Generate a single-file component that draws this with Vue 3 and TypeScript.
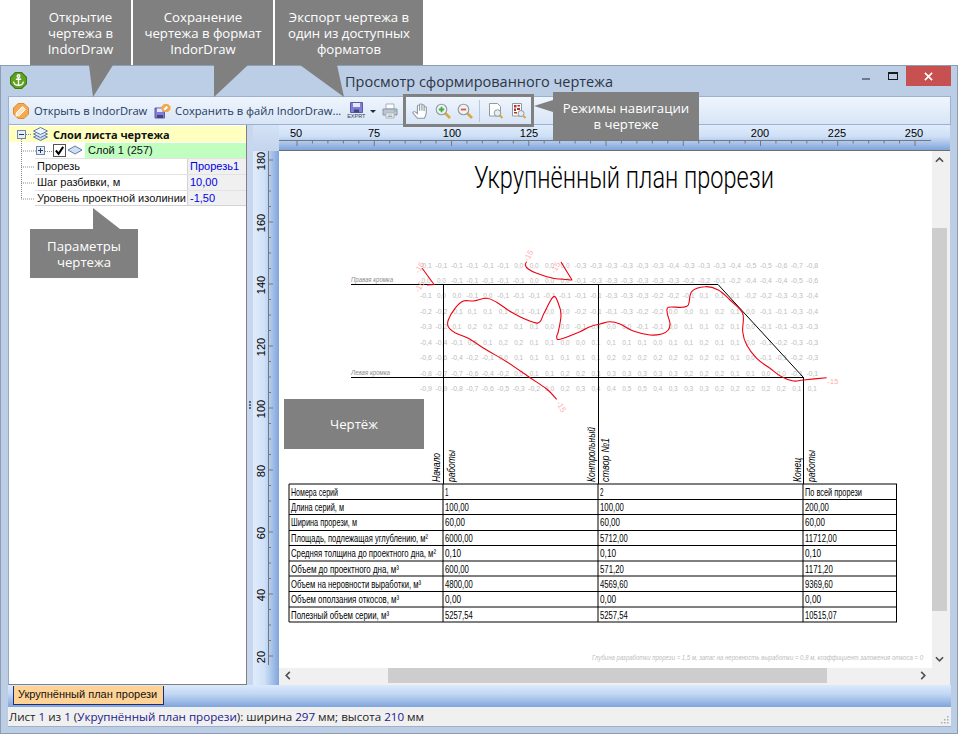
<script setup lang="ts">
type Pt = [number, number];
const zoomA = (a: number[]): Pt[] => {
  const r: Pt[] = [];
  for (let i = 0; i < a.length; i += 2) r.push([340 + a[i] / 3, 245 + a[i + 1] / 3]);
  return r;
};
const zoomB = (a: number[]): Pt[] => {
  const r: Pt[] = [];
  for (let i = 0; i < a.length; i += 2) r.push([590 + a[i] / 3, 245 + a[i + 1] / 3]);
  return r;
};
const smooth = (p: Pt[]): string => {
  let d = `M${p[0][0].toFixed(1)} ${p[0][1].toFixed(1)}`;
  for (let i = 0; i < p.length - 1; i++) {
    const a = p[Math.max(0, i - 1)];
    const b = p[i];
    const c = p[i + 1];
    const e = p[Math.min(p.length - 1, i + 2)];
    const c1x = b[0] + (c[0] - a[0]) / 6;
    const c1y = b[1] + (c[1] - a[1]) / 6;
    const c2x = c[0] - (e[0] - b[0]) / 6;
    const c2y = c[1] - (e[1] - b[1]) / 6;
    d += `C${c1x.toFixed(1)} ${c1y.toFixed(1)} ${c2x.toFixed(1)} ${c2y.toFixed(1)} ${c[0].toFixed(1)} ${c[1].toFixed(1)}`;
  }
  return d;
};
const mainCurve = smooth([
  ...zoomA([650,463,620,432,570,398,500,350,440,315,385,280,345,263,325,245,325,225,345,190,370,168,400,168,440,160,470,172,520,205,580,232,600,230,612,205,640,155,655,175,663,210,655,260,650,275,660,283,720,260]),
  ...zoomB([0,245,30,237,60,230,90,237,130,258,180,270,215,267,235,255,240,235,232,205,235,187,275,187,295,180,305,140,345,125,385,135,420,165,458,205,458,260,470,300,500,340,540,370,575,395,610,408,640,405,710,398]),
]);
const curveB = 'M561 262L572 280' + smooth(zoomA([697,105,640,100,590,85,565,72,556,60,560,50])).replace('M', 'L');

const grid: string[] = [
  '-0,1 -0,1 -0,1 -0,1 -0,1 -0,1 0,0 0,0 0,0 0,0 -0,3 -0,3 -0,3 -0,3 -0,3 -0,3 -0,4 -0,3 -0,3 -0,3 -0,4 -0,5 -0,5 -0,6 -0,7 -0,8',
  '0,0 0,0 -0,1 -0,1 -0,1 -0,1 -0,1 0,0 0,0 0,0 -0,1 -0,3 -0,3 -0,3 -0,3 -0,3 -0,3 -0,2 -0,2 -0,1 -0,2 -0,4 -0,4 -0,4 -0,5 -0,6',
  '-0,1 0,0 0,0 -0,1 0,0 -0,1 -0,1 -0,1 -0,1 -0,1 -0,1 -0,1 -0,3 -0,3 -0,3 -0,2 -0,2 -0,1 0,1 0,1 0,1 -0,2 -0,2 -0,3 -0,3 -0,4',
  '-0,2 -0,2 -0,1 0,1 0,1 0,1 -0,1 -0,1 0,0 0,0 -0,2 -0,1 -0,1 -0,3 -0,2 -0,2 0,0 0,0 0,1 0,2 0,1 0,0 -0,1 -0,1 -0,3 -0,4',
  '-0,3 -0,2 0,1 0,2 0,2 0,2 0,1 0,1 0,0 0,0 -0,1 0,0 0,0 0,0 -0,1 -0,1 0,0 0,1 0,1 0,2 0,1 0,0 -0,1 -0,1 -0,3 -0,3',
  '-0,4 -0,4 -0,1 0,0 0,1 0,2 0,2 0,1 0,1 0,0 0,0 0,1 0,1 0,1 0,1 0,0 0,1 0,1 0,2 0,1 0,1 0,0 -0,1 -0,2 -0,3 -0,3',
  '-0,6 -0,6 -0,4 -0,2 -0,1 0,0 0,1 0,1 0,1 0,1 0,1 0,1 0,2 0,2 0,2 0,2 0,2 0,2 0,2 0,2 0,1 0,0 -0,1 -0,1 -0,2 -0,3',
  '-0,8 -0,7 -0,7 -0,6 -0,4 -0,2 0,0 0,1 0,1 0,2 0,2 0,3 0,3 0,3 0,3 0,3 0,3 0,2 0,2 0,2 0,1 0,1 0,0 0,0 -0,1 -0,1',
  '-0,9 -0,9 -0,8 -0,7 -0,6 -0,5 -0,3 -0,2 0,0 0,2 0,3 0,4 0,4 0,5 0,5 0,4 0,3 0,3 0,3 0,2 0,2 0,2 0,2 0,2 0,1 0,1',
];
const rowY = [268, 282.5, 298, 314, 329, 345, 360, 376, 391];
const gridCells = grid.flatMap((line, r) =>
  line.split(' ').slice(0, 26).map((v, c) => ({
    k: `${r}-${c}`,
    v,
    x: 426 + c * 15.45,
    y: rowY[r],
    w: v.startsWith('-') ? 12 : 9,
  })),
);

const rowLines = [484, 499.5, 514.5, 530.5, 545.5, 561, 576, 591.5, 607, 622];
const colLines = [289, 443, 598, 803, 896.5];
const tableRows: { name: string; nw: number; vals: string[] }[] = [
  { name: 'Номера серий', nw: 47, vals: ['1', '2', 'По всей прорези'] },
  { name: 'Длина серий, м', nw: 53, vals: ['100,00', '100,00', '200,00'] },
  { name: 'Ширина прорези, м', nw: 66, vals: ['60,00', '60,00', '60,00'] },
  { name: 'Площадь, подлежащая углублению, м²', nw: 137, vals: ['6000,00', '5712,00', '11712,00'] },
  { name: 'Средняя толщина до проектного дна, м²', nw: 145, vals: ['0,10', '0,10', '0,10'] },
  { name: 'Объем до проектного дна, м³', nw: 108, vals: ['600,00', '571,20', '1171,20'] },
  { name: 'Объем на неровности выработки, м³', nw: 130, vals: ['4800,00', '4569,60', '9369,60'] },
  { name: 'Объем оползания откосов, м³', nw: 108, vals: ['0,00', '0,00', '0,00'] },
  { name: 'Полезный объем серии, м³', nw: 98, vals: ['5257,54', '5257,54', '10515,07'] },
];
const valX = [445, 600, 805];
const valW = (v: string): number => (v.length > 8 ? 57 : v.length === 1 ? 3.5 : v.length * 3.9 + 0.5);

const vertLabels = [
  { t: 'Начало', x: 440, w: 29 },
  { t: 'работы', x: 455, w: 32 },
  { t: 'Контрольный', x: 595, w: 55 },
  { t: 'створ №1', x: 609, w: 44 },
  { t: 'Конец', x: 801, w: 24 },
  { t: 'работы', x: 815, w: 32 },
];

const topLabels = [
  { v: 50, x: 296 }, { v: 75, x: 374 }, { v: 100, x: 452 }, { v: 125, x: 529 },
  { v: 150, x: 606 }, { v: 175, x: 683 }, { v: 200, x: 760 }, { v: 225, x: 837 }, { v: 250, x: 914 },
];
const topTicks = Array.from({ length: 41 }, (_, i) => ({ x: 297 + i * 15.45, major: i % 5 === 0 })).filter((t) => t.x < 931);
const leftLabels = [180, 160, 140, 120, 100, 80, 60, 40, 20].map((v, i) => ({ v, y: 160 + i * 62 }));
const leftTicks = Array.from({ length: 36 }, (_, i) => ({ y: 160 + i * 15.5, major: i % 4 === 0 })).filter((t) => t.y < 665);

const props = [
  { n: 'Прорезь', v: 'Прорезь1' },
  { n: 'Шаг разбивки, м', v: '10,00' },
  { n: 'Уровень проектной изолинии', v: '-1,50' },
];
</script>

<template>
  <div class="root">
    <div class="window">
      <div class="titlebar">
        <svg class="appicon" viewBox="0 0 16 16" width="17" height="17">
          <path d="M5 .5h6L15.5 5v6L11 15.500H5L.5 11V5z" fill="#5fa321" stroke="#3f7a12" />
          <g fill="none" stroke="#fff" stroke-width="1.300">
            <circle cx="8" cy="3.800" r="1.200" />
            <path d="M8 5v7.500M5.500 6.800h5M3.300 9c.5 2.300 2.500 3.500 4.700 3.500s4.200-1.200 4.700-3.500" />
          </g>
        </svg>
        <span class="title">Просмотр сформированного чертежа</span>
        <div class="winbtns">
          <span class="wmin"></span>
          <span class="wmax"></span>
          <span class="wclose">
            <svg viewBox="0 0 10 10" width="9" height="9"><path d="M1 1l8 8M9 1l-8 8" stroke="#fff" stroke-width="1.800" /></svg>
          </span>
        </div>
      </div>

      <div class="toolbar">
        <svg class="ic" viewBox="0 0 16 16" width="16" height="16">
          <path d="M5 .5h6L15.500 5v6L11 15.500H5L.5 11V5z" fill="#f5a84e" stroke="#e08a2a" />
          <path d="M3.500 9.500l6-6 3 3-6 6-3.500.5z" fill="#fde3c4" stroke="#fff" />
        </svg>
        <span class="tbtext open">Открыть в IndorDraw</span>
        <svg class="ic" viewBox="0 0 17 16" width="17" height="16">
          <path d="M1 5h9.500v10H1z" fill="#7f7fd8" stroke="#5a5aa8" />
          <path d="M3 5.500h5.500V9H3z" fill="#e8e8f8" />
          <path d="M3 12h6v3H3z" fill="#44447c" />
          <path d="M10 1h4l2.500 2.500v3L14 9h-4L7.500 6.500v-3z" fill="#f5a84e" />
          <path d="M9.500 6l3-3 1.500 1.500-3 3z" fill="#fff" />
        </svg>
        <span class="tbtext save">Сохранить в файл IndorDraw...</span>
        <div class="exprt">
          <svg viewBox="0 0 13 11" width="15" height="11">
            <path d="M.5.500h12v10H.5z" fill="#7f7fd8" stroke="#5a5aa8" />
            <path d="M3 1h7v4H3z" fill="#e8e8f8" />
            <path d="M4 7.500h5v3H4z" fill="#44447c" />
          </svg>
          <span>EXPRT</span>
        </div>
        <span class="caret"></span>
        <svg class="ic printer" viewBox="0 0 16 16" width="16" height="16">
          <path d="M4 1h8v5H4z" fill="#fff" stroke="#a6afbb" />
          <path d="M1 6h14v6H1z" fill="#bcc5d1" stroke="#8b95a3" />
          <path d="M4 10h8v5H4z" fill="#fff" stroke="#a6afbb" />
          <path d="M5.500 12h5M5.500 13.500h5" stroke="#9aa" />
          <circle cx="13" cy="8" r=".8" fill="#4c8" />
        </svg>
        <svg class="ic hand" viewBox="1 .5 12.500 15.500" width="17" height="16" preserveAspectRatio="none">
          <path d="M5 15.300L1.800 10.500c-.7-1.200.8-2.200 1.800-1.200L5 10.800V3.500c0-1.200 1.600-1.200 1.600 0V8 2.300c0-1.200 1.700-1.200 1.700 0V8 3c0-1.200 1.600-1.200 1.600 0v5.300-3.500c0-1.100 1.600-1.100 1.600 0V10c0 2-1 3.500-1.300 5.300z" fill="#fff" stroke="#8d96a1" stroke-width=".8" />
        </svg>
        <svg class="ic zoomi" viewBox="0 0 16 16" width="16" height="16">
          <path d="M10 10l5 5" stroke="#d9a93a" stroke-width="2.600" />
          <circle cx="6.500" cy="6.500" r="5.300" fill="#eef3f4" stroke="#8f9ba3" stroke-width="1.100" />
          <path d="M3.800 6.500h5.400M6.500 3.800v5.400" stroke="#3fae3f" stroke-width="1.800" />
        </svg>
        <svg class="ic zoomo" viewBox="0 0 16 16" width="16" height="16">
          <path d="M10 10l5 5" stroke="#d9a93a" stroke-width="2.600" />
          <circle cx="6.500" cy="6.500" r="5.300" fill="#eef3f4" stroke="#8f9ba3" stroke-width="1.100" />
          <path d="M3.800 6.500h5.400" stroke="#e05a4a" stroke-width="1.800" />
        </svg>
        <span class="tbsep"></span>
        <svg class="ic page1" viewBox="0 0 16 16" width="16" height="16">
          <path d="M1.500.5h8l3 3V13h-11z" fill="#fff" stroke="#8f9ba3" />
          <circle cx="9.500" cy="10" r="3.300" fill="#e4eef0" stroke="#8f9ba3" />
          <path d="M12 12.500l2.500 2.500" stroke="#d9a93a" stroke-width="2" />
        </svg>
        <svg class="ic page2" viewBox="0 0 16 16" width="16" height="16">
          <path d="M1.500.5h9V13h-9z" fill="#fff" stroke="#8f9ba3" />
          <path d="M3 2h2.500v2.500H3zM6.500 2H9v1.500H6.500zM3 5.500h2V8H3zM6 5h3v2H6zM3 9h3v1.500H3z" fill="#b8322a" />
          <circle cx="10" cy="10.500" r="3" fill="#e4eef0" stroke="#8f9ba3" />
          <path d="M12.300 12.800l2.200 2.200" stroke="#d9a93a" stroke-width="2" />
        </svg>
      </div>

      <div class="main">
        <div class="leftpane">
          <svg class="treelines" width="60" height="85">
            <path d="M4.500 14V74M4 42h14M4 58h14M4 74h14M4 26h15M9 9.500h6M28 26.500h8" fill="none" stroke="#8a8a8a" stroke-dasharray="1 1" />
          </svg>
          <div class="rootrow">
            <svg class="expander" viewBox="0 0 9 9" width="9" height="9">
              <rect x=".5" y=".5" width="8" height="8" fill="#e8eef8" stroke="#6f87ab" />
              <path d="M2 4.500h5" stroke="#223a66" />
            </svg>
            <svg class="layers" viewBox="0 0 16 16" width="17" height="16">
              <path d="M1 11l7-3.500 7 3.500-7 3.500z" fill="#c5d6ee" stroke="#5f7ea6" />
              <path d="M1 8l7-3.500L15 8l-7 3.500z" fill="#dce7f6" stroke="#5f7ea6" />
              <path d="M1 5l7-3.500L15 5l-7 3.500z" fill="#eef4fb" stroke="#5f7ea6" />
            </svg>
            <b class="roottext">Слои листа чертежа</b>
          </div>
          <div class="layerrow">
            <svg class="expander" viewBox="0 0 9 9" width="9" height="9">
              <rect x=".5" y=".5" width="8" height="8" fill="#e8eef8" stroke="#6f87ab" />
              <path d="M2 4.500h5M4.500 2v5" stroke="#223a66" />
            </svg>
            <span class="check">
              <svg viewBox="0 0 12 12" width="11" height="11"><path d="M2 6l3 3.500L10 2" fill="none" stroke="#000" stroke-width="2.200" /></svg>
            </span>
            <svg class="layer1" viewBox="0 0 16 10" width="16" height="10">
              <path d="M1 5l7-4 7 4-7 4z" fill="#cfe0f4" stroke="#5f7ea6" />
            </svg>
            <span class="layertext">Слой 1 (257)</span>
          </div>
          <div v-for="p in props" :key="p.n" class="proprow">
            <span class="pname">{{ p.n }}</span>
            <span class="pval">{{ p.v }}</span>
          </div>
        </div>
        <div class="splitter"><i></i><i></i><i></i></div>
        <div class="viewer">
          <div class="toprow">
            <div class="corner"></div>
            <svg class="topruler" width="671" height="25" viewBox="279 125 671 25">
              <path d="M279 140.500H931" stroke="#777" fill="none" />
              <path v-for="t in topTicks" :key="t.x" :d="`M${t.x} 140V${t.major ? 146 : 143.500}`" stroke="#777" />
              <text v-for="l in topLabels" :key="l.v" class="rtext" :x="l.x" y="137" text-anchor="middle">{{ l.v }}</text>
            </svg>
          </div>
          <div class="midrow">
            <svg class="leftruler" width="26" height="534" viewBox="253 151 26 534">
              <path d="M268.500 151V665" stroke="#777" fill="none" />
              <path v-for="t in leftTicks" :key="t.y" :d="`M268 ${t.y}H${t.major ? 273 : 271}`" stroke="#777" />
              <text v-for="l in leftLabels" :key="l.v" class="rtext" :transform="`translate(265 ${l.y + 1}) rotate(-90)`" text-anchor="middle">{{ l.v }}</text>
            </svg>
            <div class="canvaswrap">
              <div class="canvasrow">
                <svg class="sheet" width="653" height="517" viewBox="279 151 653 517">
                  <text class="heading" x="474" y="188" textLength="300" lengthAdjust="spacingAndGlyphs">Укрупнённый план прорези</text>
                  <text v-for="c in gridCells" :key="c.k" class="gridtext" :x="c.x" :y="c.y" text-anchor="middle" :textLength="c.w" lengthAdjust="spacingAndGlyphs">{{ c.v }}</text>
                  <text class="edge" x="351" y="282" textLength="42" lengthAdjust="spacingAndGlyphs">Правая кромка</text>
                  <text class="edge" x="351" y="375" textLength="39" lengthAdjust="spacingAndGlyphs">Левая кромка</text>
                  <path d="M351 284.500H718L803 377M351 377.500H803M443.500 284V484M598.500 284V484M803.500 377V484" fill="none" stroke="#000" />
                  <path :d="mainCurve" fill="none" stroke="#ee0010" stroke-width="1.100" />
                  <path :d="curveB" fill="none" stroke="#ee0010" stroke-width="1.100" />
                  <path d="M422 268L434 284.500L427 285" fill="none" stroke="#ee0010" stroke-width="1.100" />
                  <text class="redtext" transform="translate(528 262) rotate(-60)">-15</text>
                  <text class="redtext" transform="translate(556 403) rotate(60)">-15</text>
                  <text class="redtext" x="827" y="384">-15</text>
                  <text class="redtext" transform="translate(419 274) rotate(-60)">-15</text>
                  <text class="redtext" transform="translate(419 293) rotate(-60)">-15</text>
                  <text class="redtext" transform="translate(555 274) rotate(-60)">-15</text>

                  <text v-for="v in vertLabels" :key="v.x" class="vert" :transform="`translate(${v.x} 482) rotate(-90)`" :textLength="v.w" lengthAdjust="spacingAndGlyphs">{{ v.t }}</text>

                  <path v-for="y in rowLines" :key="y" :d="`M289 ${y}H897`" stroke="#000" />
                  <path v-for="x in colLines" :key="x" :d="`M${x} 484V622`" stroke="#000" />
                  <g v-for="(r, i) in tableRows" :key="r.name">
                    <text class="cell" x="291" :y="rowLines[i] + 11.5" :textLength="r.nw" lengthAdjust="spacingAndGlyphs">{{ r.name }}</text>
                    <text v-for="(v, j) in r.vals" :key="j" class="cell" :x="valX[j]" :y="rowLines[i] + 11.5" :textLength="valW(v)" lengthAdjust="spacingAndGlyphs">{{ v }}</text>
                  </g>
                  <text class="note" x="592" y="660" textLength="331" lengthAdjust="spacingAndGlyphs">Глубина разработки прорези = 1,5 м, запас на неровность выработки = 0,8 м, коэффициент заложения откоса = 0</text>
                </svg>
                <div class="vscroll">
                  <svg class="arrow" viewBox="0 0 10 6" width="9" height="6"><path d="M1 5l4-4 4 4" fill="none" stroke="#505050" stroke-width="1.800" /></svg>
                  <div class="vthumb"></div>
                  <svg class="arrow" viewBox="0 0 10 6" width="9" height="6"><path d="M1 1l4 4 4-4" fill="none" stroke="#505050" stroke-width="1.800" /></svg>
                </div>
              </div>
              <div class="hscroll">
                <svg class="arrowh" viewBox="0 0 6 10" width="6" height="9"><path d="M5 1L1 5l4 4" fill="none" stroke="#505050" stroke-width="1.800" /></svg>
                <div class="hthumb"></div>
                <svg class="arrowh" viewBox="0 0 6 10" width="6" height="9"><path d="M1 1l4 4-4 4" fill="none" stroke="#505050" stroke-width="1.800" /></svg>
              </div>
            </div>
          </div>
        </div>
      </div>

      <div class="tabs"><span class="tab">Укрупнённый план прорези</span></div>
      <div class="status">
        <span>Лист <em>1</em> из <em>1</em> (<em>Укрупнённый план прорези</em>): ширина <em>297</em> мм; высота <em>210</em> мм</span>
        <svg class="grip" width="10" height="10" viewBox="0 0 10 10">
          <path d="M8 1h1.500v1.500H8zM5 4h1.500v1.500H5zM8 4h1.500v1.500H8zM2 7h1.500v1.500H2zM5 7h1.500v1.500H5zM8 7h1.500v1.500H8z" fill="#a9adb3" />
        </svg>
      </div>
    </div>

    <svg class="arrows" width="958" height="734">
      <g fill="#808080">
        <path d="M89 65H113L93 97Z" />
        <path d="M214 65H248L214 97Z" />
        <path d="M300 65H337L344 97Z" />
        <path d="M553 100V112L534 106Z" />
        <path d="M93 229V208L120 229Z" />
      </g>
    </svg>
    <div class="hl"></div>
    <div class="note-box n1">Открытие<br />чертежа в<br />IndorDraw</div>
    <div class="note-box n2">Сохранение<br />чертежа в формат<br />IndorDraw</div>
    <div class="note-box n3">Экспорт чертежа в<br />один из доступных<br />форматов</div>
    <div class="note-box n4">Режимы навигации<br />в чертеже</div>
    <div class="note-box n5">Параметры<br />чертежа</div>
    <div class="note-box n6">Чертёж</div>
  </div>
</template>

<style>
html, body { margin: 0; background: #fff; overflow: hidden; }
</style>

<style scoped>
.root { position: relative; width: 958px; height: 734px; overflow: hidden; background: #fff; font-family: "Open Sans", sans-serif; }
.window { position: absolute; left: 0; top: 65px; width: 958px; height: 669px; box-sizing: border-box; background: #bccde6; border: 1px solid #8f9db3; display: flex; flex-direction: column; padding: 0 6px 6px 7px; }
.titlebar { height: 30px; flex: none; display: flex; align-items: flex-start; position: relative; }
.appicon { margin: 6px 0 0 2px; }
.title { position: absolute; left: 337px; top: 6px; font-size: 14.500px; color: #2b3644; white-space: nowrap; }
.winbtns { margin-left: auto; display: flex; align-items: flex-start; }
.wmin { width: 8px; height: 2px; margin: 12px 18px 0 0; background: #6d7a8c; }
.wmax { width: 8px; height: 5px; border: 1px solid #1a1a1a; border-top-width: 2px; margin: 6px 8px 0 0; }
.wclose { width: 45px; height: 20px; background: #c75050; display: flex; align-items: center; justify-content: center; }

.toolbar { height: 27px; flex: none; display: flex; align-items: center; background: linear-gradient(#eff5fd, #d8e5f6); border: 1px solid #9db1cf; box-sizing: content-box; padding-left: 4px; }
.tbtext { font-size: 11.200px; color: #243a5e; white-space: nowrap; }
.open { margin: 0 7px 0 5px; letter-spacing: -0.100px; }
.save { margin: 0 6px 0 4px; }
.exprt { width: 18px; display: flex; flex-direction: column; align-items: center; }
.exprt span { font-size: 5.500px; line-height: 6px; color: #2d3d56; font-family: "Liberation Sans", sans-serif; }
.caret { width: 0; height: 0; border: 3px solid transparent; border-top: 3px solid #1e2d44; border-bottom: 0; margin-left: 5px; margin-top: 1px; }
.printer { margin-left: 6px; }
.hand { margin-left: 14px; }
.zoomi { margin-left: 6px; }
.zoomo { margin-left: 6px; }
.tbsep { width: 1px; height: 22px; background: #b6c6dd; margin-left: 6px; }
.page1 { margin-left: 8px; }
.page2 { margin-left: 7px; }

.main { flex: 1; min-height: 0; display: flex; }
.leftpane { width: 237px; flex: none; position: relative; background: #fff; border: 1px solid #808080; border-top: 0; border-left-color: #9ba9bd; font-family: "Liberation Sans", sans-serif; font-size: 11px; color: #111; box-sizing: content-box; }
.treelines { position: absolute; left: 8px; top: 0; z-index: 1; }
.rootrow { height: 16px; margin-top: 1px; display: flex; align-items: center; background: #ffffc0; position: relative; padding-left: 8px; }
.expander { flex: none; display: block; }
.layers { margin-left: 6px; }
.roottext { margin-left: 4px; font-size: 11px; letter-spacing: -0.050px; font-family: "Open Sans", sans-serif; }
.layerrow { height: 16px; display: flex; align-items: center; position: relative; padding-left: 27px; }
.check { width: 11px; height: 11px; border: 1px solid #555; background: #fff; margin-left: 8px; flex: none; display: block; }
.check svg { display: block; }
.layer1 { margin-left: 1px; flex: none; }
.layertext { flex: 1; background: #c0ffc0; height: 15px; line-height: 15px; padding-left: 3px; margin-left: 2px; }
.proprow { height: 16px; margin-left: 26px; box-sizing: border-box; border-top: 1px solid #e2e2e2; display: flex; position: relative; line-height: 15px; background: #fff; }
.proprow:last-of-type { border-bottom: 1px solid #d4d4d4; }
.pname { width: 152px; flex: none; padding-left: 2px; box-sizing: border-box; white-space: nowrap; }
.pval { flex: 1; background: #f0f0f0; color: #0000e0; padding-left: 2px; border-left: 1px solid #d4d4d4; }
.splitter { width: 6px; flex: none; background: #c8d7ee; display: flex; flex-direction: column; align-items: center; justify-content: center; gap: 1px; }
.splitter i { width: 2px; height: 2px; background: #56698a; }

.viewer { flex: 1; min-width: 0; display: flex; flex-direction: column; }
.toprow { height: 26px; flex: none; display: flex; }
.corner { width: 26px; flex: none; background: linear-gradient(#d4e2f5, #c3d4ec); }
.topruler { display: block; background: linear-gradient(#e0ecfc 0%, #cfe0f7 45%, #7fa5dc 100%); border-bottom: 1px solid #6e6e6e; }
.midrow { flex: 1; min-height: 0; display: flex; }
.leftruler { display: block; flex: none; background: linear-gradient(90deg, #e0ecfc 0%, #cfe0f7 45%, #7fa5dc 100%); }
.rtext { font-family: "Liberation Sans", sans-serif; font-size: 11px; fill: #000; }
.canvaswrap { width: 671px; flex: none; display: flex; flex-direction: column; background: #f0f0f0; }
.canvasrow { display: flex; height: 517px; flex: none; }
.sheet { display: block; background: #fff; flex: none; }
.vscroll { width: 15px; flex: none; display: flex; flex-direction: column; align-items: center; justify-content: space-between; position: relative; padding: 6px 0; box-sizing: border-box; background: #f0f0f0; }
.vthumb { position: absolute; left: 0; top: 77px; width: 15px; height: 383px; background: #cdcdcd; }
.arrow, .arrowh { display: block; position: relative; flex: none; }
.hscroll { height: 15px; width: 653px; flex: none; display: flex; align-items: center; justify-content: space-between; position: relative; padding: 0 6px; box-sizing: border-box; }
.hthumb { position: absolute; left: 109px; top: 0; width: 439px; height: 15px; background: #cdcdcd; }

.heading { font-family: Roboto, sans-serif; font-weight: 300; font-size: 31px; fill: #000; }
.gridtext { font-family: "Liberation Sans", sans-serif; font-size: 8px; fill: #bcbcbc; }
.edge { font-family: "Liberation Sans", sans-serif; font-style: italic; font-size: 8px; fill: #8a8a8a; }
.redtext { font-family: "Liberation Sans", sans-serif; font-size: 8px; fill: #ffb0b0; }
.vert, .cell { font-family: "Liberation Sans", sans-serif; font-size: 10.500px; fill: #000; }
.vert { font-style: italic; font-size: 11px; }
.note { font-family: "Liberation Sans", sans-serif; font-style: italic; font-size: 8px; fill: #bcbcbc; }

.tabs { height: 22px; flex: none; box-sizing: border-box; background: linear-gradient(#dbe9fc, #c3d8f4 40%, #7fa5dc); padding: 1px 0 0 5px; }
.tab { display: block; width: 151px; height: 19px; box-sizing: border-box; background: #ffd296; border: 1px solid #1c2a78; border-top: 0; font-family: "Liberation Sans", sans-serif; font-size: 11px; line-height: 17px; padding-left: 4px; color: #111; white-space: nowrap; }
.status { height: 20px; flex: none; box-sizing: border-box; background: #f0f0f0; display: flex; align-items: center; justify-content: space-between; font-family: "Open Sans", sans-serif; font-size: 11.600px; color: #222; padding-left: 1px; border-bottom: 1px solid #9fb0c8; }
.status em { font-style: normal; color: #1a1a8c; }
.grip { margin-right: 2px; margin-top: 7px; }

.arrows { position: absolute; left: 0; top: 0; pointer-events: none; }
.hl { position: absolute; left: 403px; top: 94px; width: 125px; height: 27px; border: 3px solid #808080; }
.note-box { position: absolute; background: #808080; color: #fff; text-align: center; font-size: 13.200px; line-height: 16px; display: flex; align-items: center; justify-content: center; box-sizing: border-box; white-space: nowrap; }
.n1 { left: 30px; top: 0; width: 101px; height: 65px; padding-top: 1px; }
.n2 { left: 133px; top: 0; width: 140px; height: 65px; padding-top: 1px; }
.n3 { left: 275px; top: 0; width: 148px; height: 65px; padding-top: 1px; }
.n4 { left: 553px; top: 92px; width: 146px; height: 48px; }
.n5 { left: 30px; top: 229px; width: 108px; height: 49px; }
.n6 { left: 284px; top: 399px; width: 140px; height: 50px; }
</style>
